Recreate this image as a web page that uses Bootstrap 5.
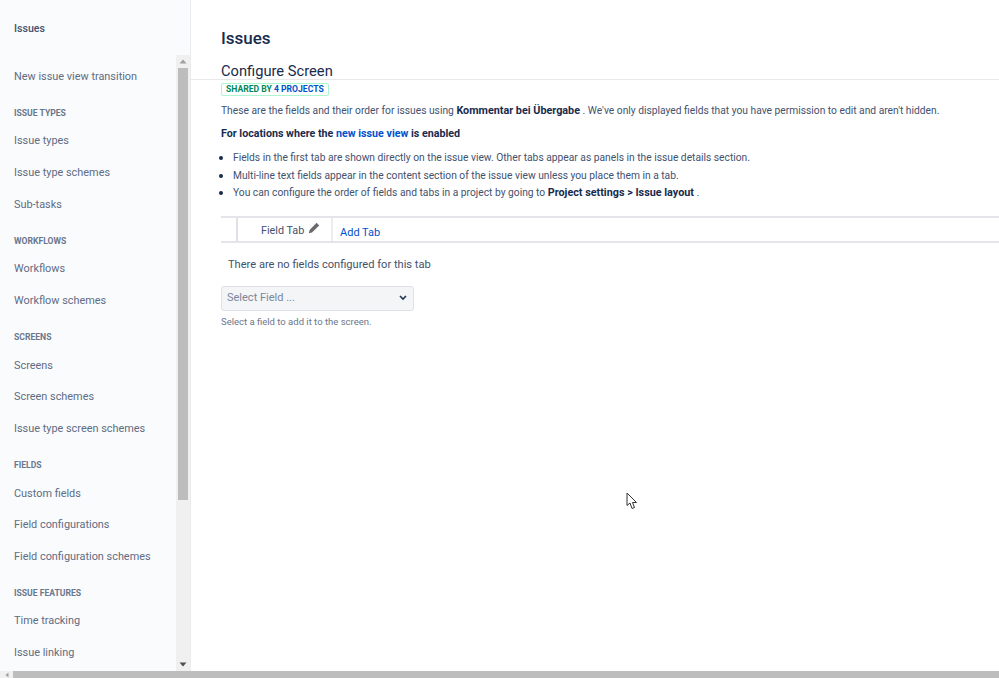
<!DOCTYPE html>
<html lang="en">
<head>
<meta charset="utf-8">
<title>Issues</title>
<link href="https://cdn.jsdelivr.net/npm/bootstrap@5.3.0/dist/css/bootstrap.min.css" rel="stylesheet">
<style>
html,body{height:678px;overflow:hidden}
body{font-family:Roboto,"Open Sans","Liberation Sans",sans-serif;font-size:11px;color:#42526e;background:#fff}
.shell{height:671px;overflow:hidden}
.side{width:191px;background:#fafbfc;border-right:1px solid #ebecf0;flex:none}
.side-title{height:55px;padding:21px 14px 0;font-size:10.6px;font-weight:500;line-height:15px;color:#42526e}
.side-body{height:616px;min-height:0}
.side-nav{width:176px;padding:6px 0 0 14px;overflow:hidden}
.side-link{display:block;height:31.75px;line-height:31.75px;color:#5e6c84;font-size:10.9px;text-decoration:none;white-space:nowrap}
.side-head{padding:14px 0 6.7px;font-size:8.6px;line-height:12px;font-weight:700;color:#6b778c;text-transform:uppercase;white-space:nowrap}
.vbar{width:14px;background:#f0f0f0;flex:none}
.vbtn{height:13px}
.vthumb{height:432px;width:10px;background:#bdbdbd;margin:0 auto}
.vspace{flex:1}
.work{min-width:0}
.page-h{font-size:17px;font-weight:500;color:#172b4d;margin:0;padding:28px 0 0 30px;line-height:20px}
.cfg-h{font-size:14.7px;font-weight:400;color:#172b4d;margin:14px 0 0;padding-left:30px;line-height:18px;border-bottom:1px solid #e8e8e8;height:18px}
.text-area{padding:0 0 0 30px}
.shared{display:block;width:fit-content;border:1px solid #abf5d1;border-radius:2px;font-size:8.6px;font-weight:700;line-height:11px;padding:0 4px;height:13px;text-transform:uppercase;color:#00875a;margin-top:3px}
.shared a{color:#0052cc;text-decoration:none}
.para{margin:7px 0 0;line-height:16px;white-space:nowrap;font-size:10.25px}
.para b,.tips b{color:#172b4d;font-weight:700;font-size:10.8px}
.para a{color:#0052cc;text-decoration:none}
.para-strong{color:#172b4d;font-weight:700;font-size:10.7px}
.tips{margin:7px 0 0;padding:0 0 0 12px;line-height:17.6px;white-space:nowrap;font-size:10.25px;color:#42526e}
.tips li::marker{color:#172b4d;font-size:12px}
.tabbar{margin:14px 0 0 30px;border-top:2px solid #e4e5ea;border-bottom:2px solid #e4e5ea;height:27px;padding-left:15px}
.tab-on{width:97px;border-left:2px solid #dfe1e6;border-right:2px solid #ebecf0;padding:4px 0 0 23px;font-size:10.8px;color:#42526e;line-height:17px;gap:4px}
.tab-add{margin-left:7px;padding-top:6px;font-size:11px;color:#0052cc;text-decoration:none;line-height:17px}
.empty{padding:14px 0 0 37px;line-height:15px;font-size:11.1px;color:#42526e}
.pick{margin:14px 0 0 30px;width:193px;height:25px;background:#f4f5f7;border:1px solid #dfe1e6;border-radius:3px;padding:0 6px 0 5px;color:#7a869a;font-size:11px}
.pick-note{margin:5px 0 0 30px;font-size:9.5px;line-height:12px;color:#6b778c}
.hbar{height:7px;background:#f0f0f0}
.hbtn{width:13px;flex:none}
.hthumb{background:#bdbdbd}
.arrow-mouse{position:absolute;left:626px;top:492px}
</style>
</head>
<body>
<div class="shell d-flex">
  <aside class="side d-flex flex-column">
    <div class="side-title">Issues</div>
    <div class="side-body d-flex">
      <nav class="side-nav">
        <a class="side-link" href="#">New issue view transition</a>
        <div class="side-head">Issue types</div>
        <a class="side-link" href="#">Issue types</a>
        <a class="side-link" href="#">Issue type schemes</a>
        <a class="side-link" href="#">Sub-tasks</a>
        <div class="side-head">Workflows</div>
        <a class="side-link" href="#">Workflows</a>
        <a class="side-link" href="#">Workflow schemes</a>
        <div class="side-head">Screens</div>
        <a class="side-link" href="#">Screens</a>
        <a class="side-link" href="#">Screen schemes</a>
        <a class="side-link" href="#">Issue type screen schemes</a>
        <div class="side-head">Fields</div>
        <a class="side-link" href="#">Custom fields</a>
        <a class="side-link" href="#">Field configurations</a>
        <a class="side-link" href="#">Field configuration schemes</a>
        <div class="side-head">Issue features</div>
        <a class="side-link" href="#">Time tracking</a>
        <a class="side-link" href="#">Issue linking</a>
      </nav>
      <div class="vbar d-flex flex-column align-items-center">
        <div class="vbtn d-flex align-items-center justify-content-center"><svg width="8" height="5" viewBox="0 0 8 5"><path d="M4 0.5 7.5 4.5H.5Z" fill="#a0a0a0"/></svg></div>
        <div class="vthumb"></div>
        <div class="vspace"></div>
        <div class="vbtn d-flex align-items-center justify-content-center"><svg width="8" height="5" viewBox="0 0 8 5"><path d="M4 4.5 7.5.5H.5Z" fill="#505050"/></svg></div>
      </div>
    </div>
  </aside>
  <main class="work flex-grow-1">
    <h1 class="page-h">Issues</h1>
    <h2 class="cfg-h">Configure Screen</h2>
    <div class="text-area">
      <span class="shared">Shared by <a href="#">4 projects</a></span>
      <p class="para">These are the fields and their order for issues using <b>Kommentar bei Übergabe</b> . We've only displayed fields that you have permission to edit and aren't hidden.</p>
      <p class="para para-strong">For locations where the <a href="#">new issue view</a> is enabled</p>
      <ul class="tips">
        <li>Fields in the first tab are shown directly on the issue view. Other tabs appear as panels in the issue details section.</li>
        <li>Multi-line text fields appear in the content section of the issue view unless you place them in a tab.</li>
        <li>You can configure the order of fields and tabs in a project by going to <b>Project settings &gt; Issue layout</b> .</li>
      </ul>
    </div>
    <div class="tabbar d-flex">
      <div class="tab-on d-flex align-items-start"><span>Field Tab</span>
        <svg width="12" height="12" viewBox="0 0 12 12"><path d="M8.6.8 11.2 3.4 4 10.4.8 11.2 1.6 8Z" fill="#6b6b6b"/></svg>
      </div>
      <a class="tab-add" href="#">Add Tab</a>
    </div>
    <div class="empty">There are no fields configured for this tab</div>
    <div class="pick d-flex align-items-center justify-content-between"><span>Select Field ...</span>
      <svg width="8" height="6" viewBox="0 0 8 6"><path d="M1 1 4 4 7 1" fill="none" stroke="#253858" stroke-width="1.7"/></svg>
    </div>
    <div class="pick-note">Select a field to add it to the screen.</div>
  </main>
</div>
<div class="hbar d-flex">
  <div class="hbtn d-flex align-items-center justify-content-center"><svg width="4" height="6" viewBox="0 0 4 6"><path d="M.5 3 3.5.5V5.5Z" fill="#a0a0a0"/></svg></div>
  <div class="hthumb flex-grow-1"></div>
</div>
<svg class="arrow-mouse" width="12" height="18" viewBox="0 0 12 18"><path d="M1 1V13.5L4 11 6 16.5 8.5 15.5 6.5 10.5H10.5Z" fill="#fff" stroke="#333" stroke-width="1"/></svg>
</body>
</html>
